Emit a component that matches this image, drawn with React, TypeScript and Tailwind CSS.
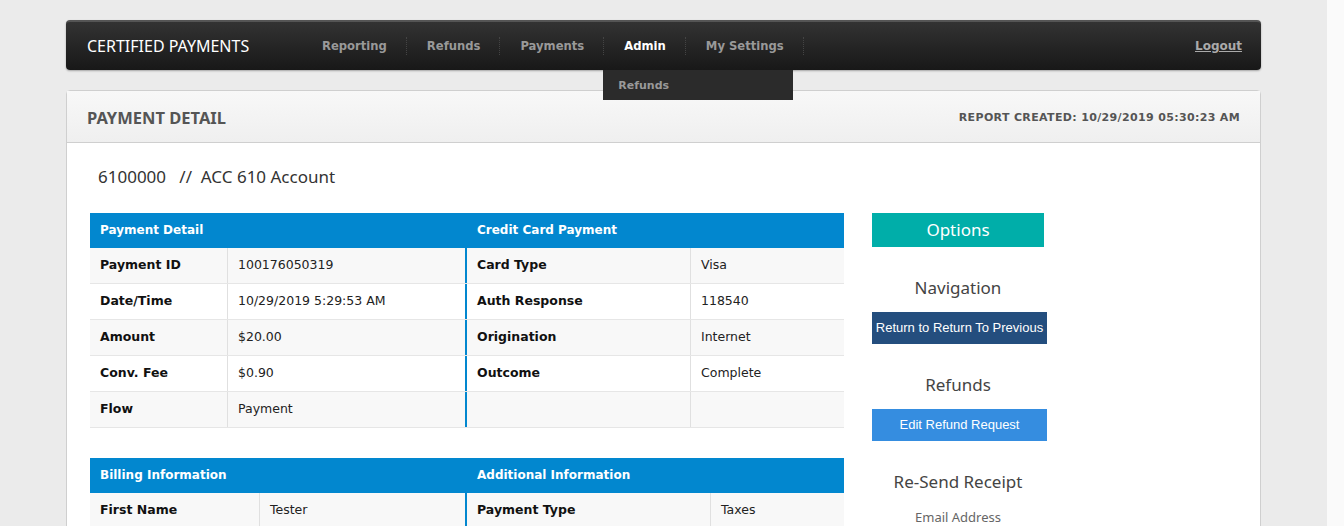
import React from "react";

const verdana = { fontFamily: '"DejaVu Sans", Verdana, sans-serif' };
const heading = { fontFamily: '"Noto Sans", "Open Sans", sans-serif' };
const arial = { fontFamily: '"Liberation Sans", Arial, sans-serif' };

type Row = [string, string];

function DetailTable({
  leftTitle,
  rightTitle,
  left,
  right,
  leftLabelW,
  rightLabelW,
}: {
  leftTitle: string;
  rightTitle: string;
  left: Row[];
  right: Row[];
  leftLabelW: string;
  rightLabelW: string;
}) {
  return (
    <div className="w-[754px]" style={verdana}>
      <div className="flex h-[35px] items-center bg-[#0287cf] text-[12px] font-bold text-white">
        <div className="w-[377px] pl-[10px]">{leftTitle}</div>
        <div className="pl-[10px]">{rightTitle}</div>
      </div>
      {left.map((r, i) => (
        <div
          key={i}
          className={`flex h-[36px] border-b border-[#e6e6e6] text-[12.5px] ${i % 2 === 0 ? "bg-[#f8f8f8]" : "bg-white"}`}
        >
          <div className="flex w-[377px]">
            <div className={`${leftLabelW} flex items-center border-r border-[#e0e0e0] pl-[10px] font-bold text-[#111]`}>{r[0]}</div>
            <div className="flex flex-1 items-center border-r-2 border-[#0287cf] pl-[10px] text-[#222]">{r[1]}</div>
          </div>
          <div className="flex flex-1">
            <div className={`${rightLabelW} flex items-center border-r border-[#e0e0e0] pl-[10px] font-bold text-[#111]`}>{right[i][0]}</div>
            <div className="flex flex-1 items-center pl-[10px] text-[#222]">{right[i][1]}</div>
          </div>
        </div>
      ))}
    </div>
  );
}

function Side() {
  return (
    <div className="flex w-[175px] flex-col items-start" style={heading}>
      <div className="flex h-[34px] w-[172px] items-center justify-center bg-[#00aea9] text-[17px] text-white">Options</div>
      <div className="mt-[28px] w-[172px] text-center text-[17px] text-[#444]">Navigation</div>
      <div className="mt-[12px] flex h-[32px] w-[175px] items-center justify-center bg-[#244e7e] text-[13px] text-white" style={arial}>
        Return to Return To Previous
      </div>
      <div className="mt-[28px] w-[172px] text-center text-[17px] text-[#444]">Refunds</div>
      <div className="mt-[11px] flex h-[32px] w-[175px] items-center justify-center bg-[#358de0] text-[13px] text-white" style={arial}>
        Edit Refund Request
      </div>
      <div className="mt-[28px] w-[172px] text-center text-[17px] text-[#444]">Re-Send Receipt</div>
      <div className="mt-[14px] w-[172px] text-center text-[13px] text-[#666]">Email Address</div>
    </div>
  );
}

export default function App() {
  const navItems = ["Reporting", "Refunds", "Payments", "Admin", "My Settings"];
  return (
    <div className="flex h-[526px] w-[1344px] overflow-hidden">
      <div className="w-[1327px] bg-[#ebebeb]">
        <div className="mx-auto w-[1195px] pt-[20px]">
          {/* top bar */}
          <div className="relative flex h-[50px] items-stretch rounded-[4px] border-t-2 border-[#555] bg-gradient-to-b from-[#333] to-[#181818] shadow-[0_1px_2px_rgba(0,0,0,0.3)]">
            <div className="flex w-[236px] items-center pl-[21px] text-[16px] text-white" style={heading}>CERTIFIED PAYMENTS</div>
            <div className="flex items-stretch text-[11.6px] font-bold" style={verdana}>
              {navItems.map((n) => (
                <div key={n} className="relative flex items-center">
                  <span className={`pt-[2px] pr-[19px] pl-[20px] ${n === "Admin" ? "text-white" : "text-[#999]"}`}>{n}</span>
                  <span className="h-[18px] border-r border-dotted border-[#444]" />
                  {n === "Admin" && (
                    <div className="absolute top-[48px] left-[-1px] z-10 flex h-[30px] w-[190px] items-center bg-[#2b2b2b] pt-[2px] pl-[15px] text-[11px] text-[#999]">
                      Refunds
                    </div>
                  )}
                </div>
              ))}
            </div>
            <div className="ml-auto flex items-center pr-[19px] text-[12px] font-bold text-[#aaa] underline" style={verdana}>Logout</div>
          </div>

          {/* panel */}
          <div className="mt-[20px] h-[500px] rounded-t-[4px] border border-[#cfcfcf] bg-white">
            <div className="flex h-[52px] items-center justify-between border-b border-[#cfcfcf] bg-gradient-to-b from-[#f8f8f8] to-[#efefef] px-[20px] pt-[3px]">
              <div className="text-[16.5px] font-bold text-[#555]" style={heading}>PAYMENT DETAIL</div>
              <div className="text-[11px] font-bold tracking-[0.35px] text-[#555]" style={verdana}>REPORT CREATED: 10/29/2019 05:30:23 AM</div>
            </div>
            <div className="px-[23px]">
              <div className="pt-[21px] pl-[8px] text-[17px] text-[#333]" style={heading}>
                6100000&nbsp;&nbsp;&nbsp;//&nbsp;&nbsp;ACC 610 Account
              </div>
              <div className="mt-[23px] flex gap-[28px]">
                <div className="flex flex-col gap-[30px]">
                  <DetailTable
                    leftTitle="Payment Detail"
                    rightTitle="Credit Card Payment"
                    leftLabelW="w-[138px]"
                    rightLabelW="w-[224px]"
                    left={[
                      ["Payment ID", "100176050319"],
                      ["Date/Time", "10/29/2019 5:29:53 AM"],
                      ["Amount", "$20.00"],
                      ["Conv. Fee", "$0.90"],
                      ["Flow", "Payment"],
                    ]}
                    right={[
                      ["Card Type", "Visa"],
                      ["Auth Response", "118540"],
                      ["Origination", "Internet"],
                      ["Outcome", "Complete"],
                      ["", ""],
                    ]}
                  />
                  <DetailTable
                    leftTitle="Billing Information"
                    rightTitle="Additional Information"
                    leftLabelW="w-[170px]"
                    rightLabelW="w-[244px]"
                    left={[["First Name", "Tester"]]}
                    right={[["Payment Type", "Taxes"]]}
                  />
                </div>
                <Side />
              </div>
            </div>
          </div>
        </div>
      </div>
      <div className="w-[17px] bg-[#fafafa]" />
    </div>
  );
}
